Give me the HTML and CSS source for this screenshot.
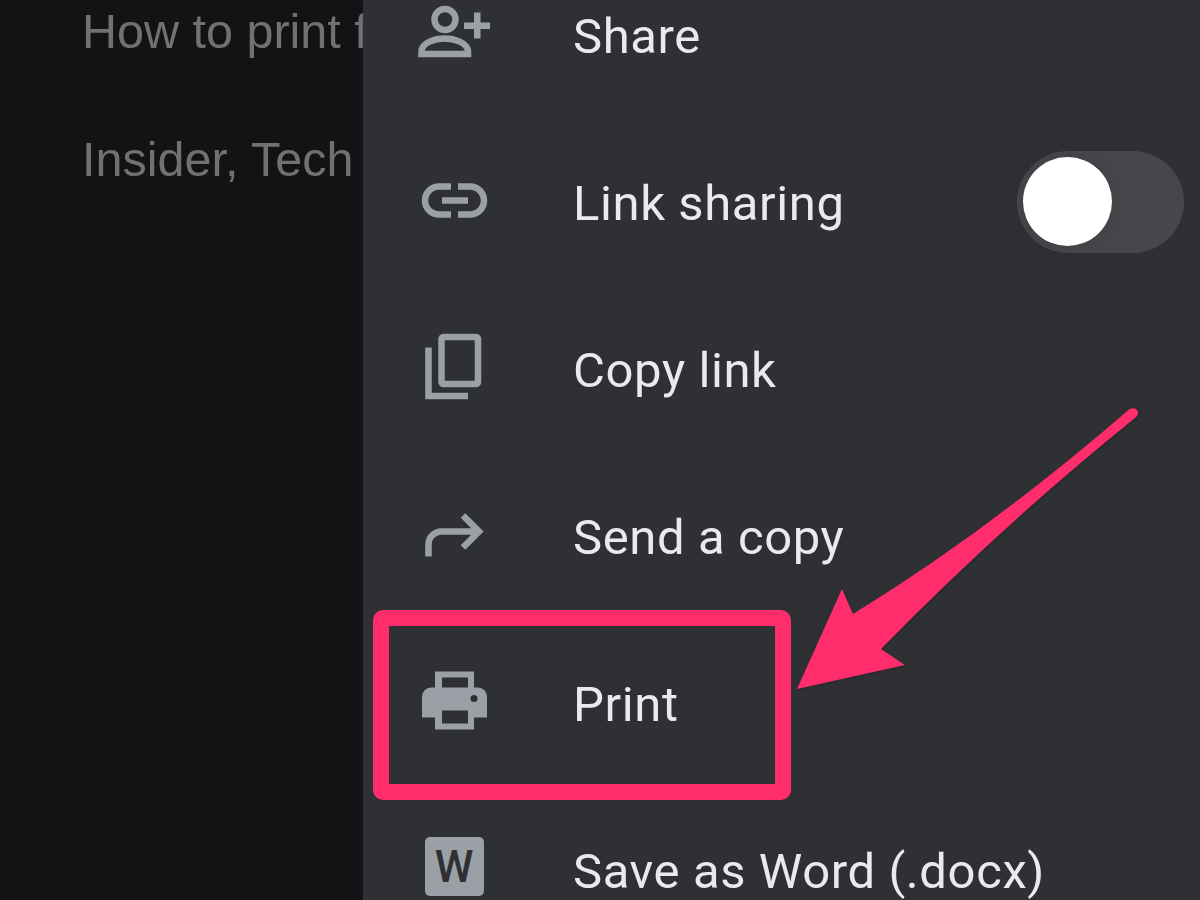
FILE: index.html
```html
<!DOCTYPE html>
<html lang="en">
<head>
<meta charset="utf-8">
<title>Print menu</title>
<link rel="stylesheet" href="styles.css">
</head>
<body>
<main class="screen">
  <section class="doc">
    <p class="doc-line">How to print f</p>
    <p class="doc-line">Insider, Tech</p>
  </section>
  <nav class="menu">
    <div class="row">
      <svg class="icon" viewBox="415 -4.500 80 80"><circle class="st" cx="445" cy="19" r="10.500"/><path class="st" d="M421.500 53.500V51c0-9 14-13 23-13s23.500 4 23.500 13v2.500z"/><path class="fl" d="M474 12h6.500v10H490v6.500h-9.500V38H474v-9.500h-10V22h10z"/></svg>
      <span class="label">Share</span>
    </div>
    <div class="row">
      <svg class="icon" viewBox="415 162.500 80 80"><path class="st" d="M451 186h-12a14 14 0 0 0 0 28h12M458 186h12a14 14 0 0 1 0 28h-12M442 200h26"/></svg>
      <span class="label">Link sharing</span>
      <span class="toggle"><span class="knob"></span></span>
    </div>
    <div class="row">
      <svg class="icon" viewBox="415 329.500 80 80"><rect class="st" x="441.500" y="336.500" width="36.500" height="47" rx="2"/><path class="st" d="M428.500 347v48.500H468"/></svg>
      <span class="label">Copy link</span>
    </div>
    <div class="row">
      <svg class="icon" viewBox="415 496.500 80 80"><path class="st" d="M428.500 556v-12a13 13 0 0 1 13-13H478M463 515l16 16-16 16"/></svg>
      <span class="label">Send a copy</span>
    </div>
    <div class="row">
      <svg class="icon" viewBox="415 663.500 80 80"><path class="fl" d="M435 671h39v16h4a9 9 0 0 1 9 9v21h-13v12h-39v-12h-13v-21a9 9 0 0 1 9-9h4z"/><rect class="hole" x="442" y="677" width="26" height="10"/><rect class="hole" x="442" y="710" width="26" height="13"/><circle class="hole" cx="474" cy="698" r="3.500"/></svg>
      <span class="label">Print</span>
    </div>
    <div class="row">
      <span class="icon word-slot"><span class="word">W</span></span>
      <span class="label">Save as Word (.docx)</span>
    </div>
  </nav>
  <svg class="marks" viewBox="0 0 1200 900">
    <rect class="frame" x="381" y="618" width="402" height="174" rx="2"/>
    <path class="arrow" d="M797 689L842 589L853 614Q990 530 1129 409.500Q1136 406 1138 412Q1138 416 1135 418Q1000 527 881 649L905 665Z"/>
  </svg>
</main>
</body>
</html>
```
FILE: styles.css
```css
html, body {
  margin: 0;
  height: 100%;
  overflow: hidden;
  background: #121315;
}

.screen {
  position: relative;
  display: flex;
  width: 1200px;
  height: 900px;
  overflow: hidden;
}

.doc {
  flex: 0 0 363px;
  box-sizing: border-box;
  padding-left: 82px;
  margin-top: -33px;
  overflow: hidden;
  background: #121315;
  color: #707173;
  font-family: "Liberation Sans", Arial, sans-serif;
  font-size: 48.5px;
  line-height: 128px;
  white-space: nowrap;
}

.doc-line {
  margin: 0;
}

.menu {
  flex: 1;
  display: flex;
  flex-direction: column;
  margin-top: -48px;
  padding: 0 16px 0 52px;
  background: #2f3034;
  color: #e8eaed;
  font-family: Roboto, "Liberation Sans", sans-serif;
  font-size: 49px;
  letter-spacing: 0.6px;
}

.row {
  flex: 0 0 167px;
  display: flex;
  align-items: center;
  gap: 78px;
}

.label {
  padding-top: 2px;
}

.icon {
  flex: 0 0 80px;
  width: 80px;
  height: 80px;
}

.st {
  fill: none;
  stroke: #9aa0a6;
  stroke-width: 6.5;
}

.fl {
  fill: #9aa0a6;
}

.hole {
  fill: #2f3034;
}

.word-slot {
  display: flex;
  align-items: center;
  justify-content: center;
}

.word {
  display: flex;
  align-items: center;
  justify-content: center;
  width: 59px;
  height: 59px;
  margin: 0 2px 8px 0;
  border-radius: 5px;
  background: #9aa0a6;
  color: #2f3034;
  font-size: 44px;
  font-weight: 500;
  letter-spacing: 0;
}

.toggle {
  display: flex;
  align-items: center;
  box-sizing: border-box;
  width: 167px;
  height: 102px;
  margin-left: auto;
  margin-bottom: 2px;
  padding: 0 6px;
  border-radius: 51px;
  background: #46474b;
}

.knob {
  width: 89px;
  height: 89px;
  border-radius: 50%;
  background: #fff;
  box-shadow: 0 0 14px rgba(47, 48, 52, 0.35);
}

.marks {
  position: absolute;
  left: 0;
  top: 0;
  width: 1200px;
  height: 900px;
}

.frame {
  fill: none;
  stroke: #ff2d6c;
  stroke-width: 16;
}

.arrow {
  fill: #ff2d6c;
  filter: drop-shadow(1px 1px 1px rgba(0, 0, 0, 0.2));
}
```
